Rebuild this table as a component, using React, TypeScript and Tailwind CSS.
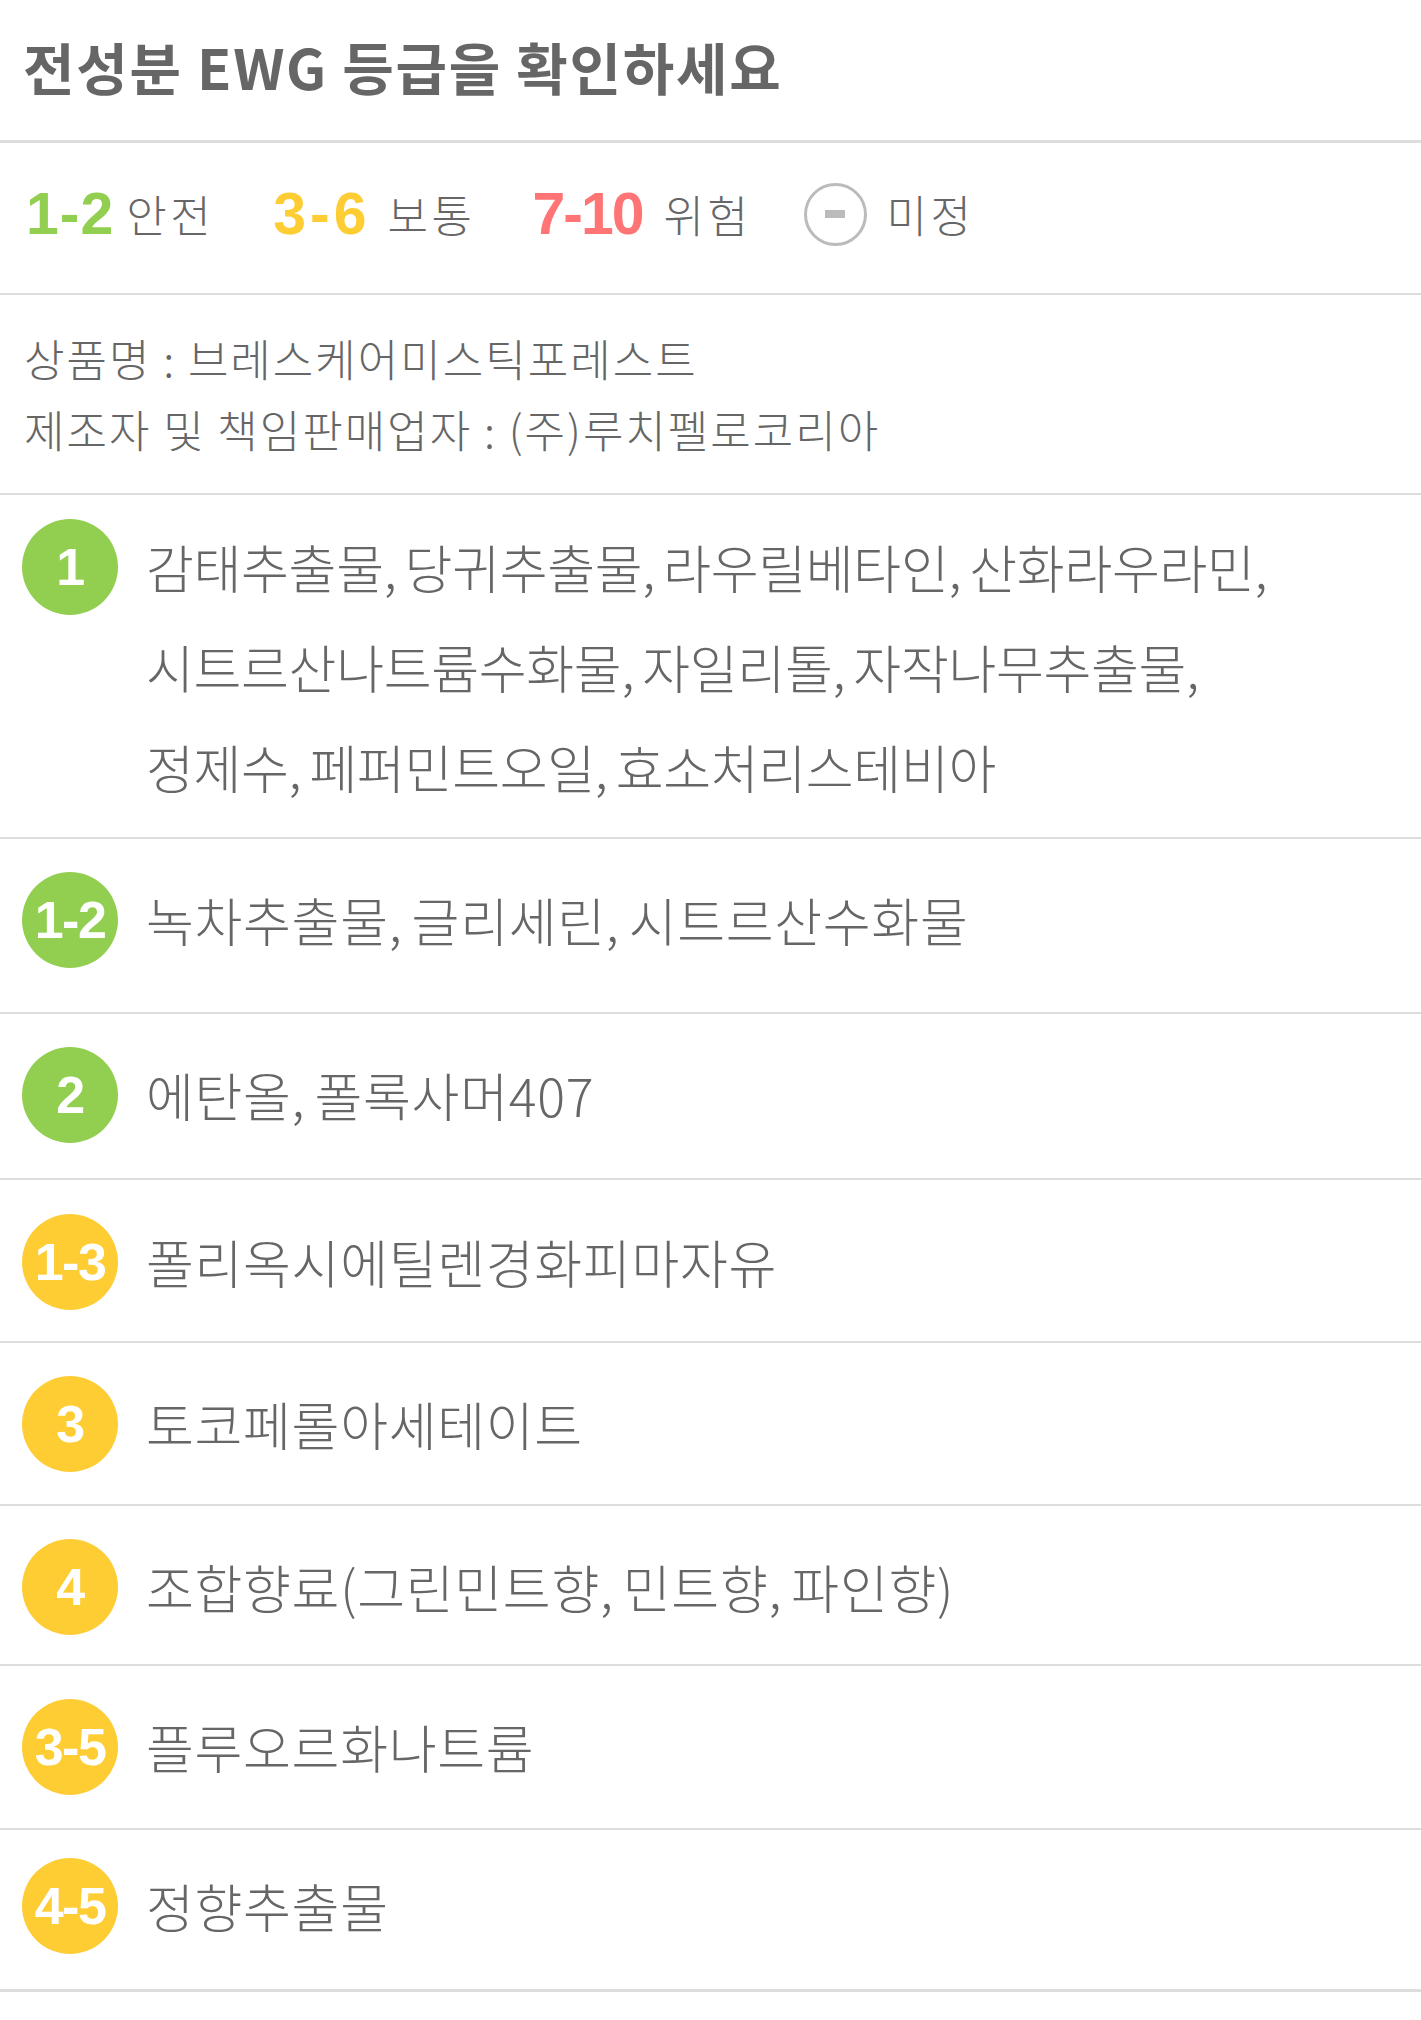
const kr = { fontFamily: '"Noto Sans CJK KR", "Noto Sans", sans-serif' };
const num = { fontFamily: '"Liberation Sans", Arial, sans-serif' };

const GREEN = "bg-[#92cf50]";
const YELLOW = "bg-[#fecc33]";

const rows = [
  {
    grade: "1",
    bg: GREEN,
    pad: "pt-[24px] pb-[22px]",
    track: "tracking-[-0.3px]",
    lines: [
      "감태추출물, 당귀추출물, 라우릴베타인, 산화라우라민,",
      "시트르산나트륨수화물, 자일리톨, 자작나무추출물,",
      "정제수, 페퍼민트오일, 효소처리스테비아",
    ],
  },
  { grade: "1-2", bg: GREEN, pad: "pt-[33px] pb-[44px]", track: "tracking-[0.7px]", lines: ["녹차추출물, 글리세린, 시트르산수화물"] },
  { grade: "2", bg: GREEN, pad: "pt-[33px] pb-[35px]", track: "tracking-[0.7px]", lines: ["에탄올, 폴록사머407"] },
  { grade: "1-3", bg: YELLOW, pad: "pt-[34px] pb-[31px]", track: "tracking-[0.7px]", lines: ["폴리옥시에틸렌경화피마자유"] },
  { grade: "3", bg: YELLOW, pad: "pt-[33px] pb-[32px]", track: "tracking-[0.7px]", lines: ["토코페롤아세테이트"] },
  { grade: "4", bg: YELLOW, pad: "pt-[33px] pb-[29px]", track: "tracking-[0.7px]", lines: ["조합향료(그린민트향, 민트향, 파인향)"] },
  { grade: "3-5", bg: YELLOW, pad: "pt-[33px] pb-[33px]", track: "tracking-[0.7px]", lines: ["플루오르화나트륨"] },
  { grade: "4-5", bg: YELLOW, pad: "pt-[28px] pb-[35px]", track: "tracking-[0.7px]", lines: ["정향추출물"] },
];

function Legend() {
  return (
    <div className="flex h-[152px] items-center border-b-2 border-[#dddddd] pb-[8px] pl-[26px]">
      <span style={num} className="text-[59px] font-bold tracking-[1px] text-[#92cf50]">1-2</span>
      <span style={kr} className="ml-[12px] text-[44px] font-light tracking-[3.5px] text-[#666666]">안전</span>

      <span style={num} className="ml-[59px] text-[59px] font-bold tracking-[4px] text-[#fecc33]">3-6</span>
      <span style={kr} className="ml-[17px] text-[44px] font-light tracking-[3.5px] text-[#666666]">보통</span>

      <span style={num} className="ml-[57px] text-[59px] font-bold tracking-[-2px] text-[#ff7474]">7-10</span>
      <span style={kr} className="ml-[21px] text-[44px] font-light tracking-[3.5px] text-[#666666]">위험</span>

      <span className="ml-[52px] flex h-[63px] w-[63px] items-center justify-center rounded-full border-[3px] border-[#bbbbbb]">
        <span className="h-[8px] w-[20px] bg-[#bbbbbb]" />
      </span>
      <span style={kr} className="ml-[20px] text-[44px] font-light tracking-[3.5px] text-[#666666]">미정</span>
    </div>
  );
}

export default function App() {
  return (
    <div className="w-[1421px] bg-white text-[#666666]" style={kr}>
      <div className="flex h-[143px] items-center border-b-[3px] border-[#dddddd] pb-[8px] pl-[23px]">
        <h1 className="text-[56px] font-bold tracking-[1.7px] text-[#666666]">전성분 EWG 등급을 확인하세요</h1>
      </div>

      <Legend />

      <div className="border-b-2 border-[#dddddd] py-[28px] pl-[24px] text-[44px] font-light leading-[71px] tracking-[2px] text-[#666666]">
        <p>상품명 : 브레스케어미스틱포레스트</p>
        <p>제조자 및 책임판매업자 : (주)루치펠로코리아</p>
      </div>

      {rows.map((row, i) => (
        <div
          key={i}
          className={`flex items-start px-[22px] ${row.pad} ${
            i === rows.length - 1 ? "border-b-[3px]" : "border-b-2"
          } border-[#dddddd]`}
        >
          <div
            style={num}
            className={`flex h-[96px] w-[96px] shrink-0 items-center justify-center rounded-full ${row.bg} text-[52px] font-bold tracking-[-1.5px] text-white`}
          >
            {row.grade}
          </div>
          <div className={`-my-[2px] ml-[28px] text-[52px] font-light leading-[100px] ${row.track} [word-spacing:-3px] text-[#666666]`}>
            {row.lines.map((line, j) => (
              <div key={j} className="whitespace-nowrap">
                {line}
              </div>
            ))}
          </div>
        </div>
      ))}
      <div className="h-[26px]" />
    </div>
  );
}
